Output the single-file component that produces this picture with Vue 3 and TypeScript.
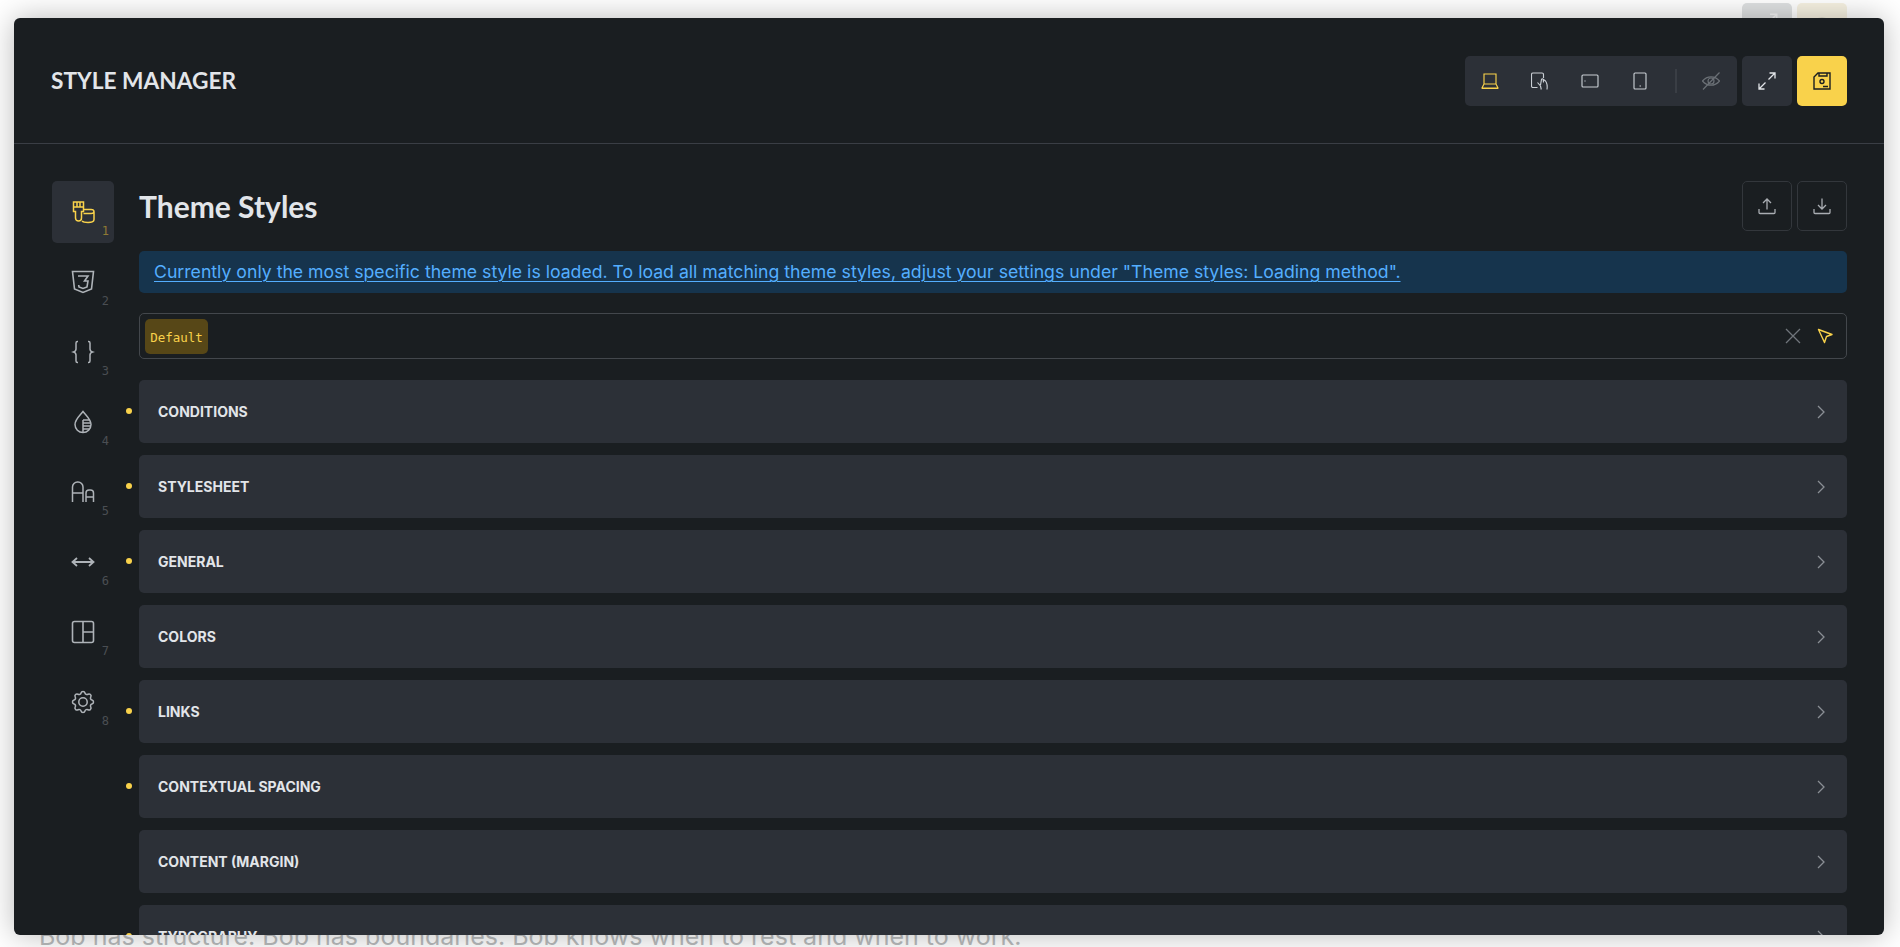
<script setup lang="ts">
interface Row { label: string; dot: boolean }
const rows: Row[] = [
  { label: 'CONDITIONS', dot: true },
  { label: 'STYLESHEET', dot: true },
  { label: 'GENERAL', dot: true },
  { label: 'COLORS', dot: false },
  { label: 'LINKS', dot: true },
  { label: 'CONTEXTUAL SPACING', dot: true },
  { label: 'CONTENT (MARGIN)', dot: false },
  { label: 'TYPOGRAPHY', dot: true },
]
const tabs = [1, 2, 3, 4, 5, 6, 7, 8]
</script>

<template>
  <div class="page">
    <div class="behind">
      <div class="behind-top">
        <span class="ghost grey">
          <svg width="22" height="22" viewBox="0 0 18 18" fill="none" stroke="#f6f6f6" stroke-width="1.200"><path d="M10.500 7.500L17 1M11.500 1H17v5.500M7.500 10.500L1 17M1 11.500V17h5.500"/></svg>
        </span>
        <span class="ghost yellow">
          <svg width="22" height="22" viewBox="0 0 22 22" fill="none" stroke="#e2decf" stroke-width="2"><circle cx="11" cy="11" r="8"/></svg>
        </span>
      </div>
      <p class="behind-text">Bob has structure. Bob has boundaries. Bob knows when to rest and when to work.</p>
    </div>
    <div class="modal">
      <header class="head">
        <h2 class="brand">STYLE MANAGER</h2>
        <div class="tools">
          <div class="group">
            <button class="tool">
              <svg width="18" height="18" viewBox="0 0 18 18" fill="none" stroke="#f9d24b" stroke-width="1.150"><path d="M3 2h12v10H3zM3 12L1 16h16l-2-4M1 16.500h16"/></svg>
            </button>
            <button class="tool">
              <svg width="18" height="18" viewBox="0 0 18 18" fill="none" stroke="#c9ced4" stroke-width="1.150"><path d="M6.500 15.500H2a1.500 1.500 0 0 1-1.500-1.500V2.500A1.500 1.500 0 0 1 2 1h9a1.500 1.500 0 0 1 1.500 1.500V6"/><path d="M6.500 10.500L9.500 14l.8 3.500M9.500 13l1-5.500c.3-1 1.500-1 1.700 0l.3 3M12.500 7.500l2 1.500c1.500 2 2 5 1.500 8.500"/></svg>
            </button>
            <button class="tool">
              <svg width="18" height="18" viewBox="0 0 18 18" fill="none" stroke="#c9ced4" stroke-width="1.150"><rect x="1" y="3" width="16" height="12" rx="1"/><path d="M4 8.500v1"/></svg>
            </button>
            <button class="tool">
              <svg width="18" height="18" viewBox="0 0 18 18" fill="none" stroke="#c9ced4" stroke-width="1.150"><rect x="3" y="1" width="12" height="16" rx="1"/><path d="M8.500 14h1.500"/></svg>
            </button>
            <span class="sep"></span>
            <button class="tool eye">
              <svg width="18" height="18" viewBox="0 0 18 18" fill="none" stroke="#6b7076" stroke-width="1.200"><path d="M.5 9C3 6 6 4.800 9 4.800S15 6 17.500 9C15 12 12 13.200 9 13.200S3 12 .5 9z"/><circle cx="9" cy="9" r="3"/><path d="M1 17.500L17.500 .5"/></svg>
            </button>
          </div>
          <button class="square">
            <svg width="18" height="18" viewBox="0 0 18 18" fill="none" stroke="#e2e5e9" stroke-width="1.300"><path d="M10.500 7.500L17 1M11.500 1H17v5.500M7.500 10.500L1 17M1 11.500V17h5.500"/></svg>
          </button>
          <button class="square save">
            <svg width="18" height="18" viewBox="0 0 18 18" fill="none" stroke="#1a1e21" stroke-width="1.400"><path d="M5 1h12v16H1V5z"/><path d="M6 1v3h8V1"/><circle cx="9" cy="9.500" r="2"/><path d="M10 14.500h5"/></svg>
          </button>
        </div>
      </header>
      <div class="body">
        <nav class="side">
          <button v-for="n in tabs" :key="n" class="tab" :class="{ active: n === 1 }">
            <svg v-if="n === 1" width="24" height="24" viewBox="0 0 24 24" fill="none" stroke="#f9d24b" stroke-width="1.500"><path d="M2.500 2h10v9.500h-2V18a3 3 0 0 1-6 0v-6.500h-2zM2.500 7h10M6 2v4.500M9 2v4.500"/><path d="M12.500 9.500H20c1.700 0 3 1 3 2.200v7.800c0 2-2.500 3-6 3-2.500 0-5-.5-6-1.500M12.500 13.500H20c1.700 0 3-.7 3-2"/></svg>
            <svg v-else-if="n === 2" width="24" height="24" viewBox="0 0 24 24" fill="none" stroke="#aeb3b8" stroke-width="1.600"><path d="M1.500 1.500h21l-2 17.500-8.500 3.500L3.500 19z"/><path d="M7 6h10l-3.500 5H17l-1 6-4 1.500-4-1.500-.3-2"/></svg>
            <svg v-else-if="n === 3" width="24" height="24" viewBox="0 0 24 24" fill="none" stroke="#aeb3b8" stroke-width="1.500"><path d="M7 1.500H6.500C5.500 1.500 5 2 5 3v6c0 1.500-.8 2.500-2.500 3C4.200 12.500 5 13.500 5 15v6c0 1 .5 1.500 1.500 1.500H7M17 1.500h.5c1 0 1.500.5 1.500 1.500v6c0 1.500.8 2.500 2.500 3-1.700.5-2.500 1.500-2.500 3v6c0 1-.5 1.500-1.500 1.500H17"/></svg>
            <svg v-else-if="n === 4" width="24" height="24" viewBox="0 0 24 24" fill="none" stroke="#aeb3b8" stroke-width="1.500"><path d="M12 1.500c3 4 8 8 8 13a8 8 0 0 1-16 0c0-5 5-9 8-13z"/><path d="M12 10h6.500M12 13h8M12 16h8M12 19h6.500M12 22.500V10"/></svg>
            <svg v-else-if="n === 5" width="24" height="24" viewBox="0 0 24 24" fill="none" stroke="#aeb3b8" stroke-width="1.500"><path d="M1.500 22V7a5 5 0 0 1 5-5h.5a5 5 0 0 1 5 5v15M1.500 13h10.500"/><path d="M15 22V13a3 3 0 0 1 3-3h1.500a3 3 0 0 1 3 3v9M15 17h7.500"/></svg>
            <svg v-else-if="n === 6" width="24" height="24" viewBox="0 0 24 24" fill="none" stroke="#aeb3b8" stroke-width="1.800"><path d="M1.500 12h21M6 8l-4.500 4L6 16M18 8l4.500 4L18 16"/></svg>
            <svg v-else-if="n === 7" width="24" height="24" viewBox="0 0 24 24" fill="none" stroke="#aeb3b8" stroke-width="1.600"><rect x="1.500" y="1.500" width="21" height="21" rx="2"/><path d="M12 1.500v21M12 12h10.500"/></svg>
            <svg v-else width="24" height="24" viewBox="0 0 24 24" fill="none" stroke="#aeb3b8"><g transform="translate(12 12) scale(1.170) translate(-12 -12)" stroke-width="1.300"><path d="M10.325 4.317c.426-1.756 2.924-1.756 3.350 0a1.724 1.724 0 0 0 2.573 1.066c1.543-.94 3.310.826 2.370 2.370a1.724 1.724 0 0 0 1.065 2.572c1.756.426 1.756 2.924 0 3.350a1.724 1.724 0 0 0-1.066 2.573c.94 1.543-.826 3.310-2.370 2.370a1.724 1.724 0 0 0-2.572 1.065c-.426 1.756-2.924 1.756-3.350 0a1.724 1.724 0 0 0-2.573-1.066c-1.543.94-3.310-.826-2.370-2.370a1.724 1.724 0 0 0-1.065-2.572c-1.756-.426-1.756-2.924 0-3.350a1.724 1.724 0 0 0 1.066-2.573c-.94-1.543.826-3.310 2.370-2.370 1 .608 2.296.07 2.572-1.065z"/><circle cx="12" cy="12" r="3.600"/></g></svg>
            <span class="num">{{ n }}</span>
          </button>
        </nav>
        <main class="main">
          <div class="title-row">
            <h1 class="title">Theme Styles</h1>
            <div class="actions">
              <button class="outline">
                <svg width="18" height="18" viewBox="0 0 18 18" fill="none" stroke="#a9adb2" stroke-width="1.300"><path d="M9 12.500V2M5 6l4-4 4 4M1 12v3.500a1 1 0 0 0 1 1h14a1 1 0 0 0 1-1V12"/></svg>
              </button>
              <button class="outline">
                <svg width="18" height="18" viewBox="0 0 18 18" fill="none" stroke="#a9adb2" stroke-width="1.300"><path d="M9 1.500V12M5 8l4 4 4-4M1 12v3.500a1 1 0 0 0 1 1h14a1 1 0 0 0 1-1V12"/></svg>
              </button>
            </div>
          </div>
          <div class="notice"><a class="notice-link">Currently only the most specific theme style is loaded. To load all matching theme styles, adjust your settings under "Theme styles: Loading method".</a></div>
          <div class="select">
            <span class="tag">Default</span>
            <span class="select-icons">
              <svg width="16" height="16" viewBox="0 0 16 16" fill="none" stroke="#70757b" stroke-width="1.300"><path d="M1 1l14 14M15 1L1 15"/></svg>
              <svg width="16" height="16" viewBox="0 0 16 16" fill="none" stroke="#f9d24b" stroke-width="1.400" stroke-linejoin="round"><path d="M1.500 1.500L15 6.500l-5.500 2L7.500 14.500z"/></svg>
            </span>
          </div>
          <div class="rows">
            <div v-for="r in rows" :key="r.label" class="row">
              <i v-if="r.dot" class="dot"></i>
              <span>{{ r.label }}</span>
              <svg width="8" height="14" viewBox="0 0 8 14" fill="none" stroke="#8a8e94" stroke-width="1.300"><path d="M1 1l6 6-6 6"/></svg>
            </div>
          </div>
        </main>
      </div>
    </div>
  </div>
</template>

<style>
html, body { margin: 0; background: #fff; overflow: hidden; }
</style>

<style scoped>
.page {
  position: relative;
  height: 947px;
  overflow: hidden;
  background: #fff;
}
.behind { position: absolute; inset: 0; z-index: 0; }
.behind-top {
  display: flex;
  justify-content: flex-end;
  gap: 5px;
  padding: 3px 53px 0 0;
}
.ghost {
  width: 50px;
  height: 50px;
  border-radius: 5px;
  display: flex;
  justify-content: center;
  align-items: flex-start;
  padding-top: 10px;
  box-sizing: border-box;
}
.ghost.grey { background: #dfe1e2; }
.ghost.yellow { background: #f7f2e2; padding-top: 12px; }
.behind-text {
  position: absolute;
  left: 39px;
  top: 921px;
  margin: 0;
  font: 400 25px/30px Inter, sans-serif;
  color: #b9bbbc;
}
.modal {
  position: absolute;
  left: 14px;
  top: 18px;
  width: 1870px;
  height: 917px;
  z-index: 1;
  background: #1a1e21;
  border-radius: 6px;
  overflow: hidden;
  box-shadow: 0 0 30px rgba(0, 0, 0, .28);
  color: #e2e5e9;
}
.head {
  height: 126px;
  box-sizing: border-box;
  border-bottom: 1px solid #3a3e45;
  padding: 38px 37px 0;
  display: flex;
  justify-content: space-between;
  align-items: flex-start;
}
.brand {
  margin: 0;
  font: 700 22.700px/50px Lato, sans-serif;
  color: #e2e5e9;
}
.tools { display: flex; gap: 5px; }
.group {
  display: flex;
  align-items: center;
  height: 50px;
  background: #2c3037;
  border-radius: 5px;
  padding-right: 1px;
}
button { border: 0; padding: 0; background: none; display: flex; align-items: center; justify-content: center; }
.tool { width: 50px; height: 50px; }
.sep { width: 2px; height: 24px; background: #3a3e45; margin-left: 10px; margin-right: 9px; }
.square { width: 50px; height: 50px; background: #2c3037; border-radius: 5px; }
.square.save { background: #f9d24b; }
.body { display: flex; padding: 37px 37px 0 38px; gap: 25px; }
.side { width: 62px; flex: none; display: flex; flex-direction: column; gap: 8px; }
.tab { position: relative; width: 62px; height: 62px; border-radius: 5px; }
.tab.active { background: #2c3037; }
.num {
  position: absolute;
  right: 5px;
  bottom: 5px;
  font: 400 12px/14px "DejaVu Sans Mono", monospace;
  color: #4a4e53;
}
.tab.active .num { color: #8f7a35; }
.main { flex: 1; min-width: 0; }
.title-row { display: flex; justify-content: space-between; height: 50px; align-items: center; margin-bottom: 20px; }
.title { margin: 0; font: 700 30px/50px Lato, sans-serif; color: #e2e5e9; }
.actions { display: flex; gap: 5px; }
.outline { width: 50px; height: 50px; box-sizing: border-box; border: 1px solid #33373c; border-radius: 5px; }
.notice {
  height: 42px;
  box-sizing: border-box;
  padding: 0 15px;
  background: #16344d;
  border-radius: 5px;
  display: flex;
  align-items: center;
  font: 400 17.660px/22px Inter, sans-serif;
  color: #54aeff;
}
.notice-link { text-decoration: underline; text-underline-offset: 3px; text-decoration-thickness: 1px; }
.select {
  margin-top: 20px;
  height: 46px;
  box-sizing: border-box;
  border: 1px solid #43474c;
  border-radius: 5px;
  padding: 0 13px 0 5px;
  display: flex;
  align-items: center;
  justify-content: space-between;
}
.tag {
  height: 35px;
  width: 63px;
  box-sizing: border-box;
  background: #574717;
  border-radius: 5px;
  color: #f9d24b;
  padding-top: 1px;
  font: 400 12.500px/35px "DejaVu Sans Mono", monospace;
  text-align: center;
}
.select-icons { display: flex; gap: 16px; align-items: center; }
.rows { margin-top: 21px; display: flex; flex-direction: column; gap: 12px; }
.row {
  position: relative;
  height: 63px;
  flex: none;
  background: #2c3037;
  border-radius: 5px;
  padding: 0 22px 0 19px;
  display: flex;
  align-items: center;
  justify-content: space-between;
  font: 700 14px/20px Inter, sans-serif;
  color: #e2e5e9;
}
.dot {
  position: absolute;
  left: -13px;
  top: 28px;
  width: 6px;
  height: 6px;
  border-radius: 50%;
  background: #f9d24b;
}
</style>
